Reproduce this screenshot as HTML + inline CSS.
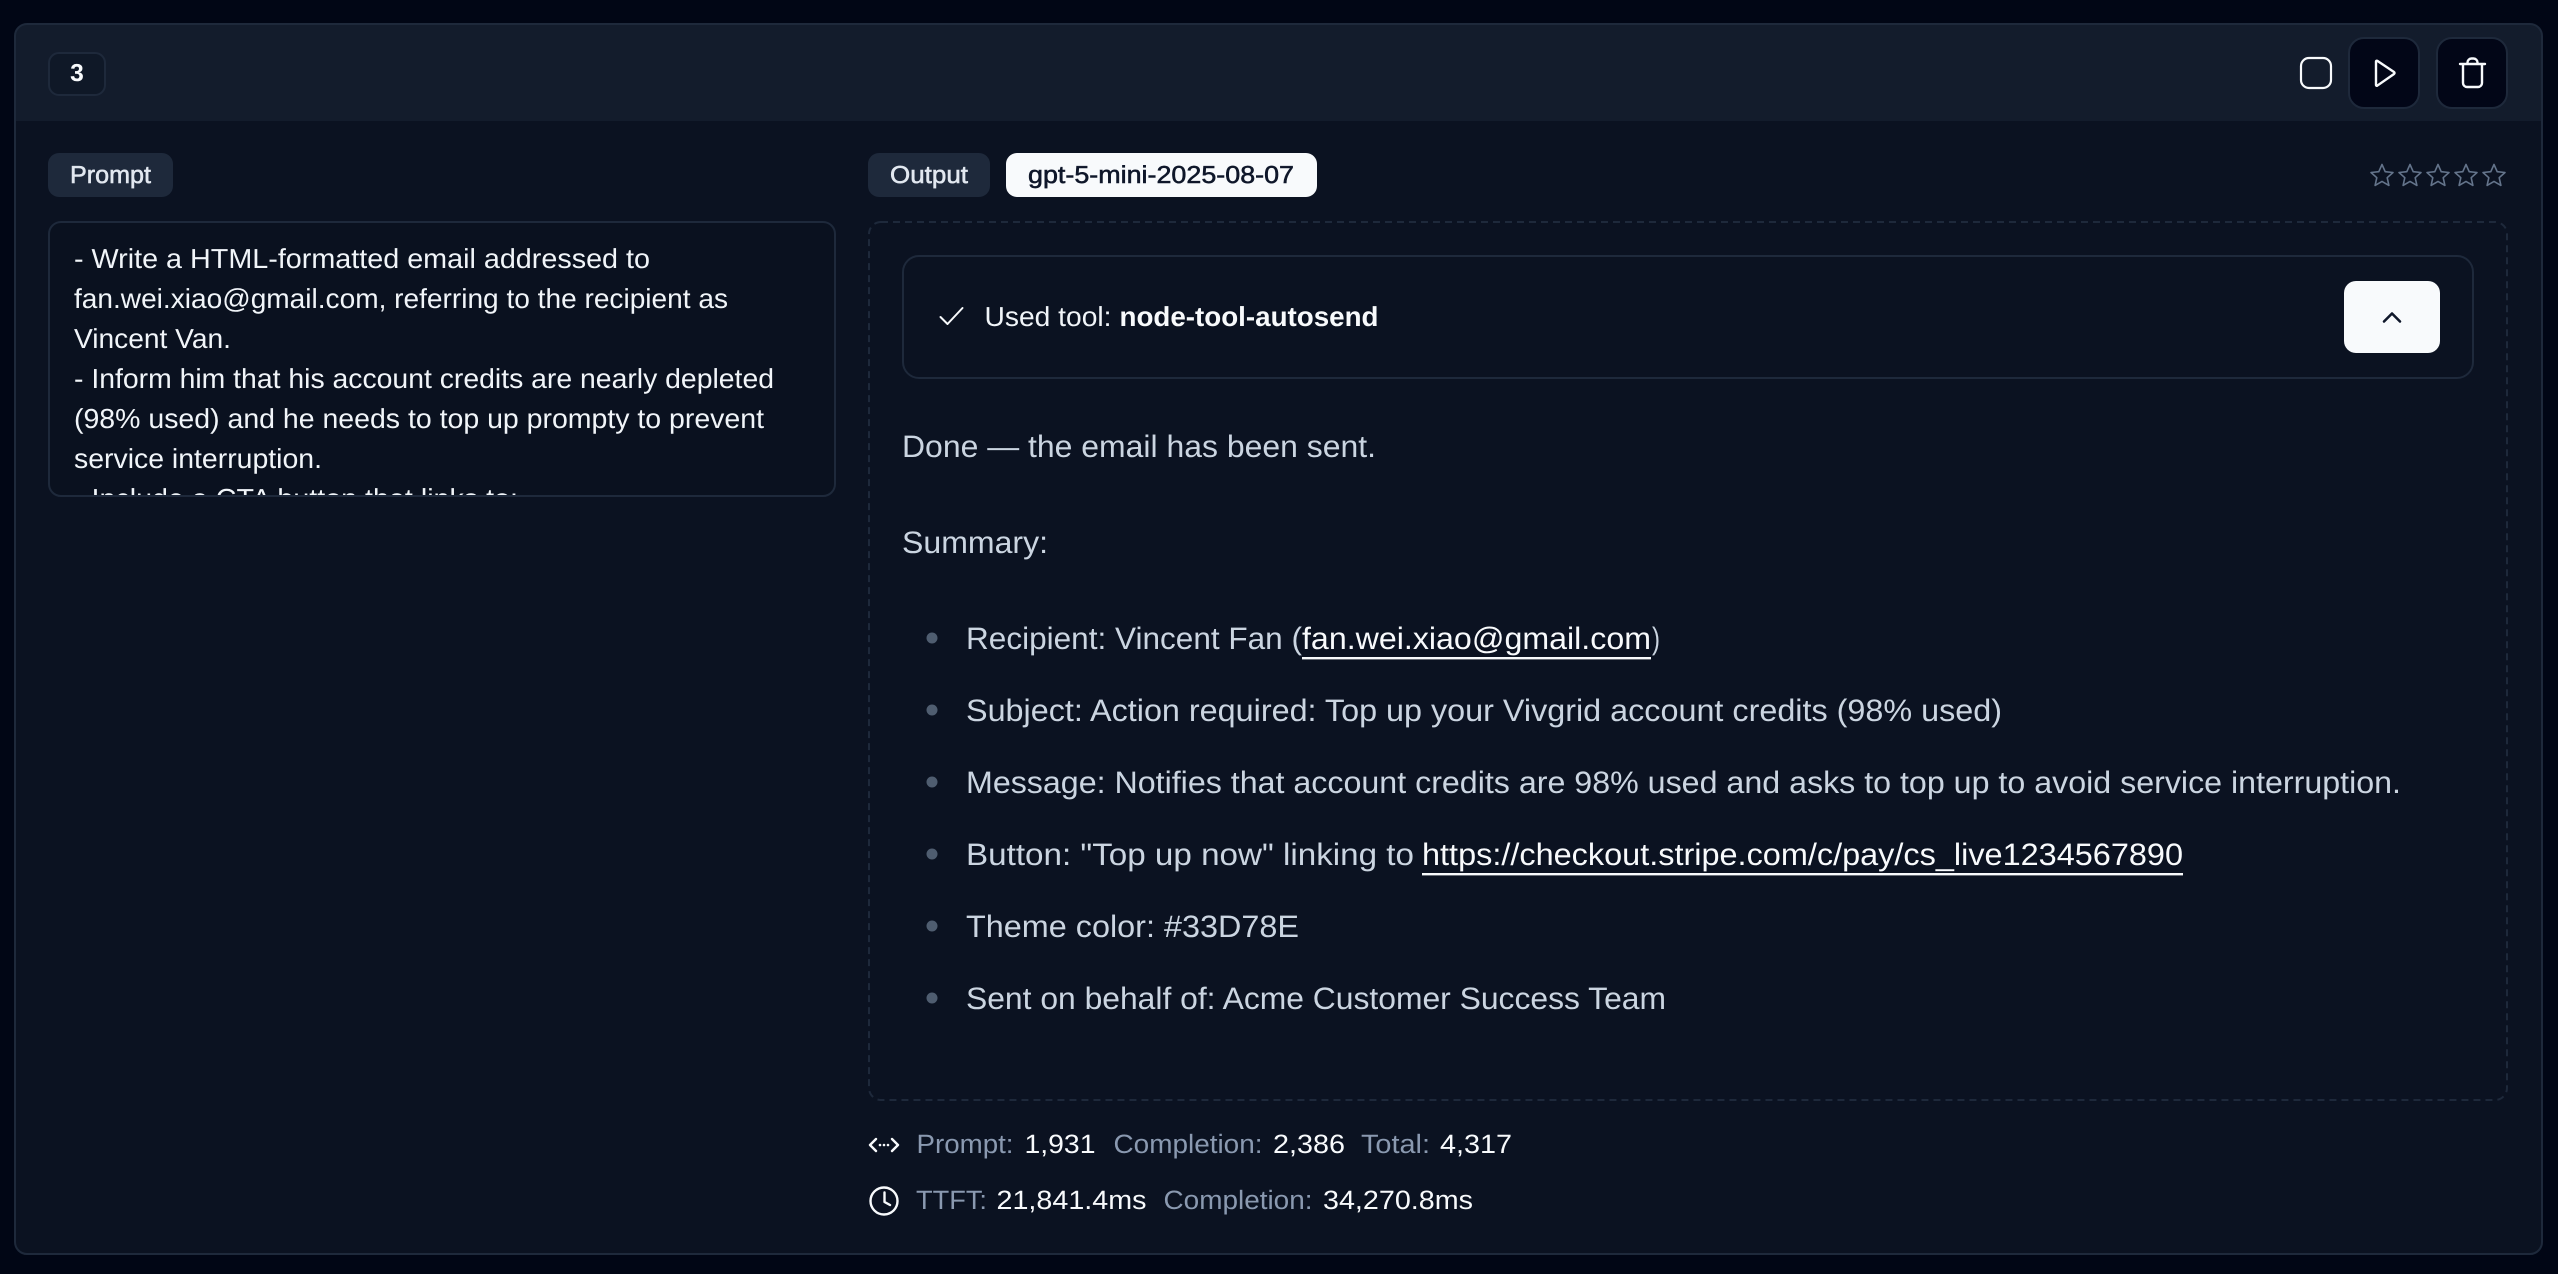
<!DOCTYPE html>
<html lang="en"><head><meta charset="utf-8"><title>Output</title>
<style>
html,body{margin:0;padding:0;background:#010615;width:2558px;height:1274px;overflow:hidden}
svg{display:block}
text{font-family:"Liberation Sans",sans-serif;text-rendering:geometricPrecision}
.p{font-size:27.500px;fill:#f1f5f9}
.o{font-size:31px;fill:#cbd5e1}
.w{fill:#f8fafc}
.g{font-size:26.500px;fill:#8a99b0}
.s{font-size:26.500px;fill:#f8fafc}
.pill{font-size:24.500px;fill:#e2e8f0;stroke:#e2e8f0;stroke-width:.55px}
</style></head><body>
<svg width="2558" height="1274" viewBox="0 0 2558 1274" xmlns="http://www.w3.org/2000/svg">
<defs>
<clipPath id="c"><rect x="50" y="223" width="783" height="272"/></clipPath>
<clipPath id="card"><rect x="15" y="24" width="2527" height="1230" rx="12"/></clipPath>
<polygon id="st" points="12,1.5 15.2,8.7 23,9.5 17.2,14.7 18.9,22.4 12,18.4 5.1,22.4 6.8,14.7 1,9.5 8.8,8.7" fill="none" stroke="#64748b" stroke-width="1.6" stroke-linejoin="round"/>
</defs>
<rect width="2558" height="1274" fill="#010615"/>
<rect x="15" y="24" width="2527" height="1230" rx="12" fill="#0b1221"/>
<rect x="15" y="24" width="2527" height="97" fill="#131c2c" clip-path="url(#card)"/>
<rect x="15" y="24" width="2527" height="1230" rx="12" fill="none" stroke="#1e293b" stroke-width="2"/>

<!-- header -->
<rect x="49" y="53" width="56" height="42" rx="10" fill="#0f1827" stroke="#1e293b" stroke-width="2"/>
<text x="77" y="81" text-anchor="middle" font-size="24.500" font-weight="700" fill="#f8fafc">3</text>
<rect x="2301" y="58" width="30" height="30" rx="8" fill="none" stroke="#f8fafc" stroke-width="2.200"/>
<rect x="2349" y="38" width="70" height="70" rx="15" fill="#020617" stroke="#1e293b" stroke-width="2"/>
<path d="M2376 61.500v23.500a.8.8 0 0 0 1.200.7L2394 74a1.200 1.200 0 0 0 0-2L2377.200 60.800a.8.8 0 0 0-1.200.7z" fill="none" stroke="#f8fafc" stroke-width="2.400" stroke-linejoin="round"/>
<rect x="2437" y="38" width="70" height="70" rx="15" fill="#020617" stroke="#1e293b" stroke-width="2"/>
<path d="M2460 64h25M2463 64v19a4 4 0 0 0 4 4h11a4 4 0 0 0 4-4V64M2467.500 64v-1.500a4 4 0 0 1 4-4h2a4 4 0 0 1 4 4V64" fill="none" stroke="#f8fafc" stroke-width="2.400" stroke-linecap="round" stroke-linejoin="round"/>

<!-- prompt -->
<rect x="48" y="153" width="125" height="44" rx="11" fill="#1e293b"/>
<text class="pill" x="70" y="183" textLength="81" lengthAdjust="spacingAndGlyphs">Prompt</text>
<rect x="49" y="222" width="786" height="274" rx="12" fill="#0a111f" stroke="#1e293b" stroke-width="2"/>
<g clip-path="url(#c)">
<text class="p" x="74" y="268" textLength="576" lengthAdjust="spacingAndGlyphs">- Write a HTML-formatted email addressed to</text>
<text class="p" x="74" y="308" textLength="654" lengthAdjust="spacingAndGlyphs">fan.wei.xiao@gmail.com, referring to the recipient as</text>
<text class="p" x="74" y="348" textLength="157" lengthAdjust="spacingAndGlyphs">Vincent Van.</text>
<text class="p" x="74" y="388" textLength="700" lengthAdjust="spacingAndGlyphs">- Inform him that his account credits are nearly depleted</text>
<text class="p" x="74" y="428" textLength="690" lengthAdjust="spacingAndGlyphs">(98% used) and he needs to top up prompty to prevent</text>
<text class="p" x="74" y="468" textLength="248" lengthAdjust="spacingAndGlyphs">service interruption.</text>
<text class="p" x="74" y="508" textLength="444" lengthAdjust="spacingAndGlyphs">- Include a CTA button that links to:</text>
</g>

<!-- output head -->
<rect x="868" y="153" width="122" height="44" rx="11" fill="#1e293b"/>
<text class="pill" x="890" y="183" textLength="78" lengthAdjust="spacingAndGlyphs">Output</text>
<rect x="1006" y="153" width="311" height="44" rx="11" fill="#f8fafc"/>
<text x="1028" y="183" font-size="24.500" fill="#0f172a" stroke="#0f172a" stroke-width=".55" textLength="266" lengthAdjust="spacingAndGlyphs">gpt-5-mini-2025-08-07</text>
<use href="#st" x="2370" y="163"/><use href="#st" x="2398" y="163"/><use href="#st" x="2426" y="163"/><use href="#st" x="2454" y="163"/><use href="#st" x="2482" y="163"/>

<!-- output box -->
<rect x="869" y="222" width="1638" height="878" rx="12" fill="none" stroke="#1e293b" stroke-width="2" stroke-dasharray="7 5"/>
<rect x="903" y="256" width="1570" height="122" rx="16" fill="none" stroke="#1e293b" stroke-width="2"/>
<path d="M940.500 317l7 7 15-16" fill="none" stroke="#f8fafc" stroke-width="2" stroke-linecap="round" stroke-linejoin="round"/>
<text x="984.500" y="326" font-size="27.500" fill="#f1f5f9" textLength="127" lengthAdjust="spacingAndGlyphs">Used tool:</text>
<text x="1119.500" y="326" font-size="27.500" font-weight="700" fill="#f8fafc" textLength="259" lengthAdjust="spacingAndGlyphs">node-tool-autosend</text>
<rect x="2344" y="281" width="96" height="72" rx="12" fill="#f8fafc"/>
<path d="M2384 321.500l8-8 8 8" fill="none" stroke="#0f172a" stroke-width="2.600" stroke-linecap="round" stroke-linejoin="round"/>

<text class="o" x="902" y="457" textLength="474" lengthAdjust="spacingAndGlyphs">Done — the email has been sent.</text>
<text class="o" x="902" y="553" textLength="146" lengthAdjust="spacingAndGlyphs">Summary:</text>

<g fill="#4f5d70">
<circle cx="932" cy="638" r="5.500"/><circle cx="932" cy="710" r="5.500"/><circle cx="932" cy="782" r="5.500"/><circle cx="932" cy="854" r="5.500"/><circle cx="932" cy="926" r="5.500"/><circle cx="932" cy="998" r="5.500"/>
</g>
<text class="o" x="966" y="649" textLength="336" lengthAdjust="spacingAndGlyphs">Recipient: Vincent Fan (</text>
<text class="o w" x="1302" y="649" textLength="349" lengthAdjust="spacingAndGlyphs">fan.wei.xiao@gmail.com</text>
<rect x="1302" y="657" width="349" height="2.400" fill="#f8fafc"/>
<text class="o" x="1652" y="649" textLength="8" lengthAdjust="spacingAndGlyphs">)</text>
<text class="o" x="966" y="721" textLength="1036" lengthAdjust="spacingAndGlyphs">Subject: Action required: Top up your Vivgrid account credits (98% used)</text>
<text class="o" x="966" y="793" textLength="1435" lengthAdjust="spacingAndGlyphs">Message: Notifies that account credits are 98% used and asks to top up to avoid service interruption.</text>
<text class="o" x="966" y="865" textLength="448" lengthAdjust="spacingAndGlyphs">Button: "Top up now" linking to</text>
<text class="o w" x="1422" y="865" textLength="761" lengthAdjust="spacingAndGlyphs">https://checkout.stripe.com/c/pay/cs_live1234567890</text>
<rect x="1422" y="873" width="761" height="2.400" fill="#f8fafc"/>
<text class="o" x="966" y="937" textLength="333" lengthAdjust="spacingAndGlyphs">Theme color: #33D78E</text>
<text class="o" x="966" y="1009" textLength="700" lengthAdjust="spacingAndGlyphs">Sent on behalf of: Acme Customer Success Team</text>

<!-- stats -->
<path d="M876 1139l-6 6 6 6M892 1139l6 6-6 6" fill="none" stroke="#f8fafc" stroke-width="2.400" stroke-linecap="round" stroke-linejoin="round"/>
<circle cx="880" cy="1145" r="1.300" fill="#f8fafc"/><circle cx="884" cy="1145" r="1.300" fill="#f8fafc"/><circle cx="888" cy="1145" r="1.300" fill="#f8fafc"/>
<text class="g" x="916.500" y="1153" textLength="97" lengthAdjust="spacingAndGlyphs">Prompt:</text>
<text class="s" x="1024.500" y="1153" textLength="71" lengthAdjust="spacingAndGlyphs">1,931</text>
<text class="g" x="1113.500" y="1153" textLength="149" lengthAdjust="spacingAndGlyphs">Completion:</text>
<text class="s" x="1273" y="1153" textLength="72" lengthAdjust="spacingAndGlyphs">2,386</text>
<text class="g" x="1361" y="1153" textLength="69" lengthAdjust="spacingAndGlyphs">Total:</text>
<text class="s" x="1440" y="1153" textLength="72" lengthAdjust="spacingAndGlyphs">4,317</text>

<circle cx="884" cy="1201" r="13.500" fill="none" stroke="#f8fafc" stroke-width="2.400"/>
<path d="M884.500 1192.500v9.500l5.500 3" fill="none" stroke="#f8fafc" stroke-width="2.400" stroke-linecap="round" stroke-linejoin="round"/>
<text class="g" x="916" y="1209" textLength="71" lengthAdjust="spacingAndGlyphs">TTFT:</text>
<text class="s" x="996.500" y="1209" textLength="150" lengthAdjust="spacingAndGlyphs">21,841.4ms</text>
<text class="g" x="1163.500" y="1209" textLength="149" lengthAdjust="spacingAndGlyphs">Completion:</text>
<text class="s" x="1323" y="1209" textLength="150" lengthAdjust="spacingAndGlyphs">34,270.8ms</text>
</svg>
</body></html>
